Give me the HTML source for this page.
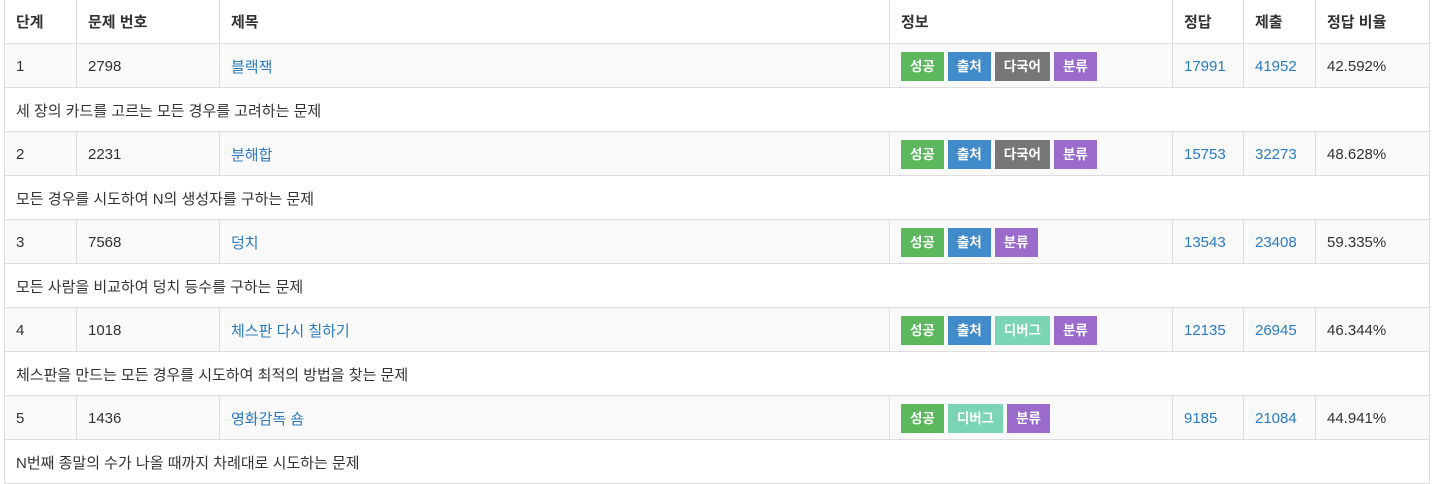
<!DOCTYPE html>
<html><head><meta charset="utf-8"><style>
body{margin:0;background:#fff;font-family:"Liberation Sans","Noto Sans CJK KR",sans-serif;font-size:15px;color:#333}
table{position:absolute;left:4px;top:0;border-collapse:collapse;width:1425px;table-layout:fixed}
td,th{border:1px solid #ddd;height:44px;padding:2px 0 0 11px;text-align:left;vertical-align:middle;box-sizing:border-box}
th{font-weight:bold;border-top:none;padding-top:0;height:43px}
tr.d td{background:#f9f9f9}
a{color:#2a7ac0;text-decoration:none}
.l{display:inline-block;height:29px;line-height:29px;color:#fff;font-size:13.5px;font-weight:bold;padding:0 9px;margin-right:4px;vertical-align:middle}
.g{background:#5cb85c}.b{background:#428bca}.k{background:#777}.p{background:#9b6bcc}.t{background:#7bd5b5}
</style></head><body>
<table>
<colgroup><col style="width:72px"><col style="width:143px"><col style="width:670px"><col style="width:283px"><col style="width:71px"><col style="width:72px"><col style="width:114px"></colgroup>
<tr><th>단계</th><th>문제 번호</th><th>제목</th><th>정보</th><th>정답</th><th>제출</th><th>정답 비율</th></tr>
<tr class="d"><td>1</td><td>2798</td><td><a>블랙잭</a></td><td><span class="l g">성공</span><span class="l b">출처</span><span class="l k">다국어</span><span class="l p">분류</span></td><td><a>17991</a></td><td><a>41952</a></td><td>42.592%</td></tr>
<tr><td colspan="7">세 장의 카드를 고르는 모든 경우를 고려하는 문제</td></tr>
<tr class="d"><td>2</td><td>2231</td><td><a>분해합</a></td><td><span class="l g">성공</span><span class="l b">출처</span><span class="l k">다국어</span><span class="l p">분류</span></td><td><a>15753</a></td><td><a>32273</a></td><td>48.628%</td></tr>
<tr><td colspan="7">모든 경우를 시도하여 N의 생성자를 구하는 문제</td></tr>
<tr class="d"><td>3</td><td>7568</td><td><a>덩치</a></td><td><span class="l g">성공</span><span class="l b">출처</span><span class="l p">분류</span></td><td><a>13543</a></td><td><a>23408</a></td><td>59.335%</td></tr>
<tr><td colspan="7">모든 사람을 비교하여 덩치 등수를 구하는 문제</td></tr>
<tr class="d"><td>4</td><td>1018</td><td><a>체스판 다시 칠하기</a></td><td><span class="l g">성공</span><span class="l b">출처</span><span class="l t">디버그</span><span class="l p">분류</span></td><td><a>12135</a></td><td><a>26945</a></td><td>46.344%</td></tr>
<tr><td colspan="7">체스판을 만드는 모든 경우를 시도하여 최적의 방법을 찾는 문제</td></tr>
<tr class="d"><td>5</td><td>1436</td><td><a>영화감독 숌</a></td><td><span class="l g">성공</span><span class="l t">디버그</span><span class="l p">분류</span></td><td><a>9185</a></td><td><a>21084</a></td><td>44.941%</td></tr>
<tr><td colspan="7">N번째 종말의 수가 나올 때까지 차례대로 시도하는 문제</td></tr>
</table>
</body></html>
